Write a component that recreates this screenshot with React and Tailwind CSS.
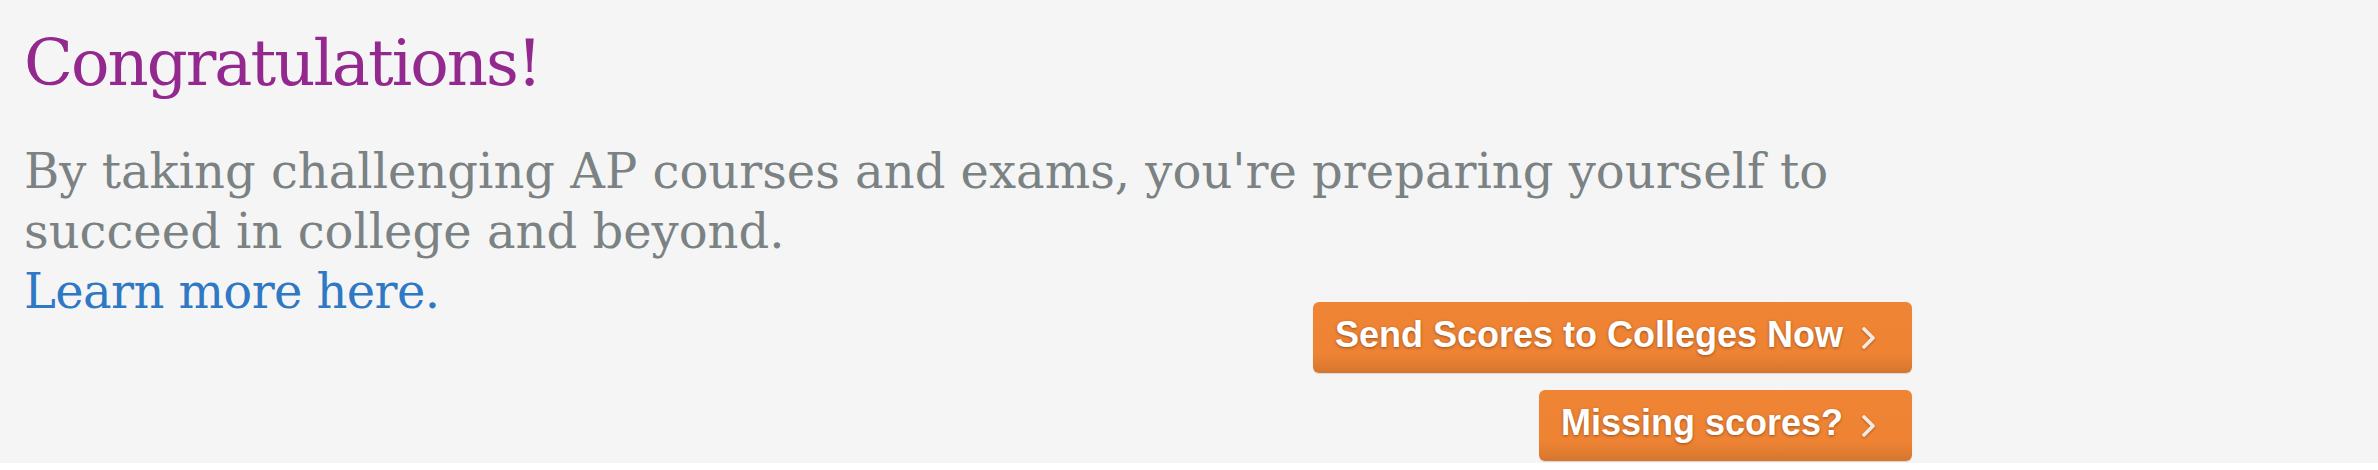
import React from 'react';

const slab = { fontFamily: '"DejaVu Serif", serif' };

function Chevron() {
  return (
    <svg
      width="16"
      height="22"
      viewBox="0 0 16 22"
      className="shrink-0 drop-shadow-[0_1px_1px_rgba(0,0,0,0.35)]"
    >
      <polyline
        points="3,2 12,11 3,20"
        fill="none"
        stroke="rgba(255,255,255,0.85)"
        strokeWidth="3.6"
        strokeLinecap="round"
        strokeLinejoin="round"
      />
    </svg>
  );
}

function OrangeButton({ children }) {
  return (
    <a
      href="#"
      className="flex h-[71px] items-center rounded-[6px] bg-[linear-gradient(to_bottom,#ef8435_0%,#ee8334_72%,#d6762e_100%)] pl-[22px] pr-[35px] shadow-[0_1px_1px_rgba(0,0,0,0.12)]"
    >
      <span
        className="pb-[6px] text-[36px] font-bold leading-none text-white [text-shadow:0_1px_3px_rgba(90,40,0,0.55)]"
        style={{ fontFamily: '"Liberation Sans", Arial, sans-serif' }}
      >
        {children}
      </span>
      <span className="ml-[18px] flex items-center">
        <Chevron />
      </span>
    </a>
  );
}

export default function App() {
  return (
    <div className="w-[2378px] bg-white pb-[6px]">
      <div className="bg-[#f5f5f5] pb-[2px] pl-6 pr-[466px] pt-[31px]">
        <h1
          className="text-[64px] font-normal leading-[64px] tracking-[-2px] text-[#93288e]"
          style={slab}
        >
          Congratulations!
        </h1>

        <p
          className="mt-[46px] text-[48px] leading-[60px] text-[#7a8284]"
          style={slab}
        >
          By taking challenging AP courses and exams, you're preparing yourself to
          <br />
          succeed in college and beyond.
        </p>

        <div className="flex items-start justify-between">
          <a
            href="#"
            className="text-[48px] leading-[60px] tracking-[-0.6px] text-[#2f78c4]"
            style={slab}
          >
            Learn more here.
          </a>
          <div className="mt-[41px] flex flex-col items-end gap-[17px]">
            <OrangeButton>Send Scores to Colleges Now</OrangeButton>
            <OrangeButton>Missing scores?</OrangeButton>
          </div>
        </div>
      </div>
    </div>
  );
}
